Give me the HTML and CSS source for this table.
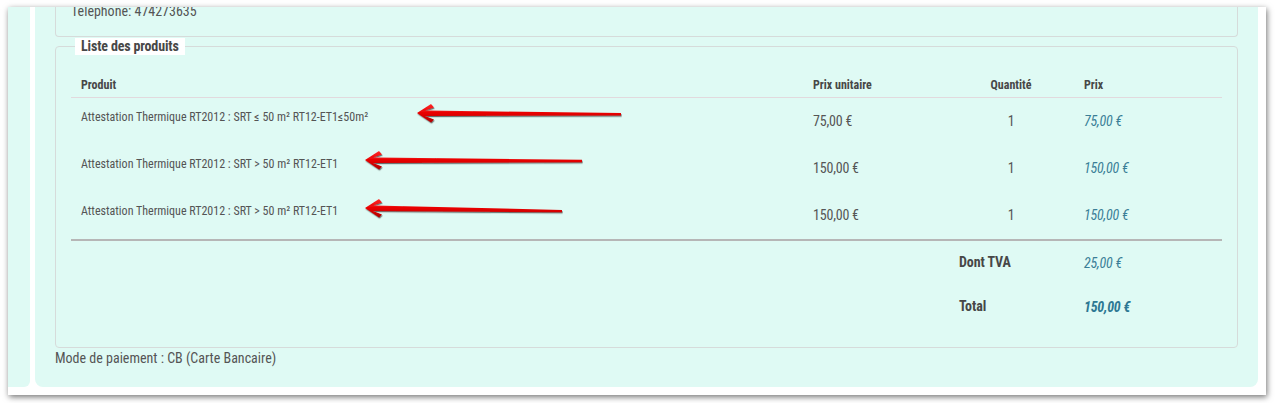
FILE: index.html
```html
<!DOCTYPE html>
<html lang="fr">
<head>
<meta charset="utf-8">
<title>Liste des produits</title>
<link rel="stylesheet" href="styles.css">
</head>
<body>
<div class="shot">
  <aside class="side"></aside>
  <main class="main">
    <fieldset class="box info">
      <p class="phone">Téléphone: 474273635</p>
    </fieldset>
    <fieldset class="box products">
      <legend>Liste des produits</legend>
      <div class="row head">
        <div class="cell">Produit</div>
        <div class="cell">Prix unitaire</div>
        <div class="cell qty">Quantité</div>
        <div class="cell">Prix</div>
      </div>
      <div class="row item">
        <div class="cell name">Attestation Thermique RT2012 : SRT ≤ 50 m² RT12-ET1≤50m²</div>
        <div class="cell num">75,00 €</div>
        <div class="cell num qty">1</div>
        <div class="cell num price">75,00 €</div>
      </div>
      <div class="row item">
        <div class="cell name">Attestation Thermique RT2012 : SRT &gt; 50 m² RT12-ET1</div>
        <div class="cell num">150,00 €</div>
        <div class="cell num qty">1</div>
        <div class="cell num price">150,00 €</div>
      </div>
      <div class="row item">
        <div class="cell name">Attestation Thermique RT2012 : SRT &gt; 50 m² RT12-ET1</div>
        <div class="cell num">150,00 €</div>
        <div class="cell num qty">1</div>
        <div class="cell num price">150,00 €</div>
      </div>
      <div class="totals">
        <div class="row sum">
          <div class="cell"></div>
          <div class="cell"></div>
          <div class="cell label">Dont TVA</div>
          <div class="cell num price">25,00 €</div>
        </div>
        <div class="row sum">
          <div class="cell"></div>
          <div class="cell"></div>
          <div class="cell label">Total</div>
          <div class="cell num price strong">150,00 €</div>
        </div>
      </div>
    </fieldset>
    <p class="payment">Mode de paiement : CB (Carte Bancaire)</p>
  </main>
</div>
<div class="annotations">
  <svg class="arrow a1" width="220" height="28" viewBox="0 0 220 28">
    <defs>
      <linearGradient id="red1" x1="0" y1="0" x2="0" y2="1">
        <stop offset="0" stop-color="#ff2a2a"/>
        <stop offset="0.5" stop-color="#e80000"/>
        <stop offset="1" stop-color="#b00000"/>
      </linearGradient>
      <filter id="sh" x="-5%" y="-40%" width="110%" height="180%">
        <feDropShadow dx="0.6" dy="1.2" stdDeviation="0.7" flood-color="#222" flood-opacity="0.65"/>
      </filter>
    </defs>
    <path d="M7,13 L21,4 L24,7.5 L15,10.5 L211,13 L211,15.4 L15,16 L24,19.5 L21,22.5 Z" fill="url(#red1)" filter="url(#sh)"/>
  </svg>
  <svg class="arrow a2" width="230" height="28" viewBox="0 0 230 28">
    <path d="M7,13 L21,4 L24,7.5 L15,10.5 L224,12.8 L224,15.2 L15,16 L24,19.5 L21,22.5 Z" fill="url(#red1)" filter="url(#sh)"/>
  </svg>
  <svg class="arrow a3" width="210" height="28" viewBox="0 0 210 28">
    <path d="M7,13 L21,4 L24,7.5 L15,10.5 L204,15 L204,17.3 L15,16 L24,19.5 L21,22.5 Z" fill="url(#red1)" filter="url(#sh)"/>
  </svg>
</div>
</body>
</html>
```
FILE: styles.css
```css
html, body {
  margin: 0;
  padding: 0;
}
body {
  position: relative;
  width: 1275px;
  height: 403px;
  overflow: hidden;
  background: #ffffff;
  font-family: "Roboto Condensed", Roboto, "Liberation Sans", sans-serif;
  font-stretch: condensed;
  color: #555555;
}
.shot {
  margin: 7px 0 0 8px;
  width: 1258px;
  height: 388px;
  box-sizing: border-box;
  padding: 0 8px 8px 0;
  background: #ffffff;
  display: flex;
  gap: 5px;
  box-shadow: 1px 2px 6px rgba(0, 0, 0, 0.55);
}
.side {
  width: 22px;
  background: #dffaf4;
  border-radius: 0 0 6px 0;
}
.main {
  flex: 1;
  min-width: 0;
  background: #dffaf4;
  border-radius: 0 0 8px 8px;
  padding: 0 20px;
  overflow: hidden;
}
.box {
  margin: 0;
  min-width: 0;
  border: 1px solid #d6dbda;
  border-radius: 4px;
  padding: 0 15px;
}
.info {
  border-top: none;
  border-radius: 0 0 4px 4px;
  height: 30px;
  box-sizing: border-box;
}
.phone {
  margin: -6px 0 0;
  font-size: 14px;
  line-height: 20px;
  color: #555555;
}
.products {
  margin-top: 1px;
  padding-bottom: 18px;
}
.products legend {
  margin-left: 4px;
  padding: 0 6px;
  background: #ffffff;
  font-size: 14px;
  line-height: 17px;
  font-weight: 700;
  color: #474747;
  letter-spacing: -0.15px;
}
.row {
  display: grid;
  grid-template-columns: 732px 145px 126px 148px;
}
.cell {
  padding-left: 10px;
}
.cell.qty {
  padding-left: 0;
  text-align: center;
}
.head {
  height: 43px;
  box-sizing: border-box;
  align-items: end;
  padding-bottom: 4px;
  border-bottom: 1px solid #e2d9dd;
  font-size: 12px;
  line-height: 16px;
  font-weight: 700;
  color: #474747;
}
.item {
  height: 47px;
  align-items: start;
}
.name {
  padding-top: 12px;
  font-size: 12px;
  line-height: 15px;
  color: #545454;
}
.num {
  padding-top: 15px;
  font-size: 14px;
  line-height: 16px;
  letter-spacing: -0.2px;
  color: #555555;
}
.price {
  font-style: italic;
  color: #3a7e97;
}
.totals {
  border-top: 2px solid #b6b6b6;
}
.sum {
  height: 44px;
  align-items: start;
}
.sum .num {
  padding-top: 14px;
}
.label {
  padding-top: 13px;
  padding-left: 11px;
  font-size: 14px;
  line-height: 16px;
  font-weight: 700;
  color: #474747;
  letter-spacing: -0.1px;
}
.strong {
  font-weight: 700;
  color: #2d7893;
  padding-top: 16px;
}
.payment {
  margin: 0;
  font-size: 14px;
  line-height: 20px;
  color: #555555;
}
.annotations {
  position: absolute;
  inset: 0;
  pointer-events: none;
}
.arrow {
  position: absolute;
  overflow: visible;
}
.a1 {
  left: 410px;
  top: 100px;
}
.a2 {
  left: 358px;
  top: 147px;
}
.a3 {
  left: 358px;
  top: 195px;
}
```
